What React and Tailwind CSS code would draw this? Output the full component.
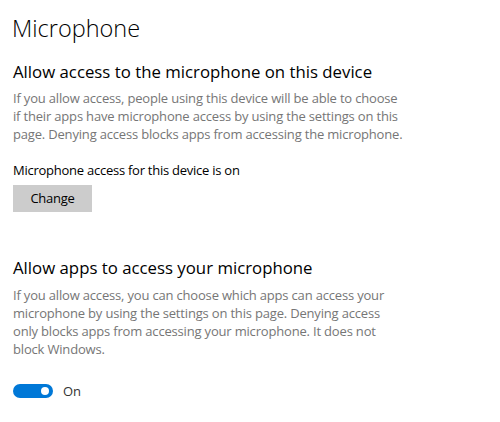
export default function App() {
  return (
    <div className="w-[500px] h-[422px] bg-white overflow-hidden pl-[13px] pt-[12px]" style={{ fontFamily: '"Open Sans", "Noto Sans", sans-serif' }}>
      <h1 className="text-[23.5px] leading-[32px] font-light text-black -ml-[1px]">Microphone</h1>

      <h2 className="mt-[16px] text-[16.8px] leading-[24px] text-black">Allow access to the microphone on this device</h2>
      <p className="mt-[5px] text-[13px] leading-[18px] tracking-[-0.18px] text-[#767676] whitespace-nowrap">
        If you allow access, people using this device will be able to choose
        <br />
        if their apps have microphone access by using the settings on this
        <br />
        page. Denying access blocks apps from accessing the microphone.
      </p>

      <p className="mt-[18px] text-[13px] leading-[18px] tracking-[-0.25px] text-black">Microphone access for this device is on</p>
      <button className="mt-[6px] w-[79px] h-[27px] bg-[#cccccc] text-[13px] tracking-[-0.25px] text-black">Change</button>

      <h2 className="mt-[44px] text-[16.8px] leading-[24px] text-black">Allow apps to access your microphone</h2>
      <p className="mt-[6px] text-[13px] leading-[18px] tracking-[-0.18px] text-[#767676] whitespace-nowrap">
        If you allow access, you can choose which apps can access your
        <br />
        microphone by using the settings on this page. Denying access
        <br />
        only blocks apps from accessing your microphone. It does not
        <br />
        block Windows.
      </p>

      <div className="mt-[24px] flex items-center gap-[10px]">
        <div className="w-[40px] h-[14px] rounded-full bg-[#0078d7] flex items-center justify-end pr-[4px]">
          <div className="w-[8px] h-[8px] rounded-full bg-white" />
        </div>
        <span className="text-[13px] leading-[18px] text-[#333333]">On</span>
      </div>
    </div>
  );
}
